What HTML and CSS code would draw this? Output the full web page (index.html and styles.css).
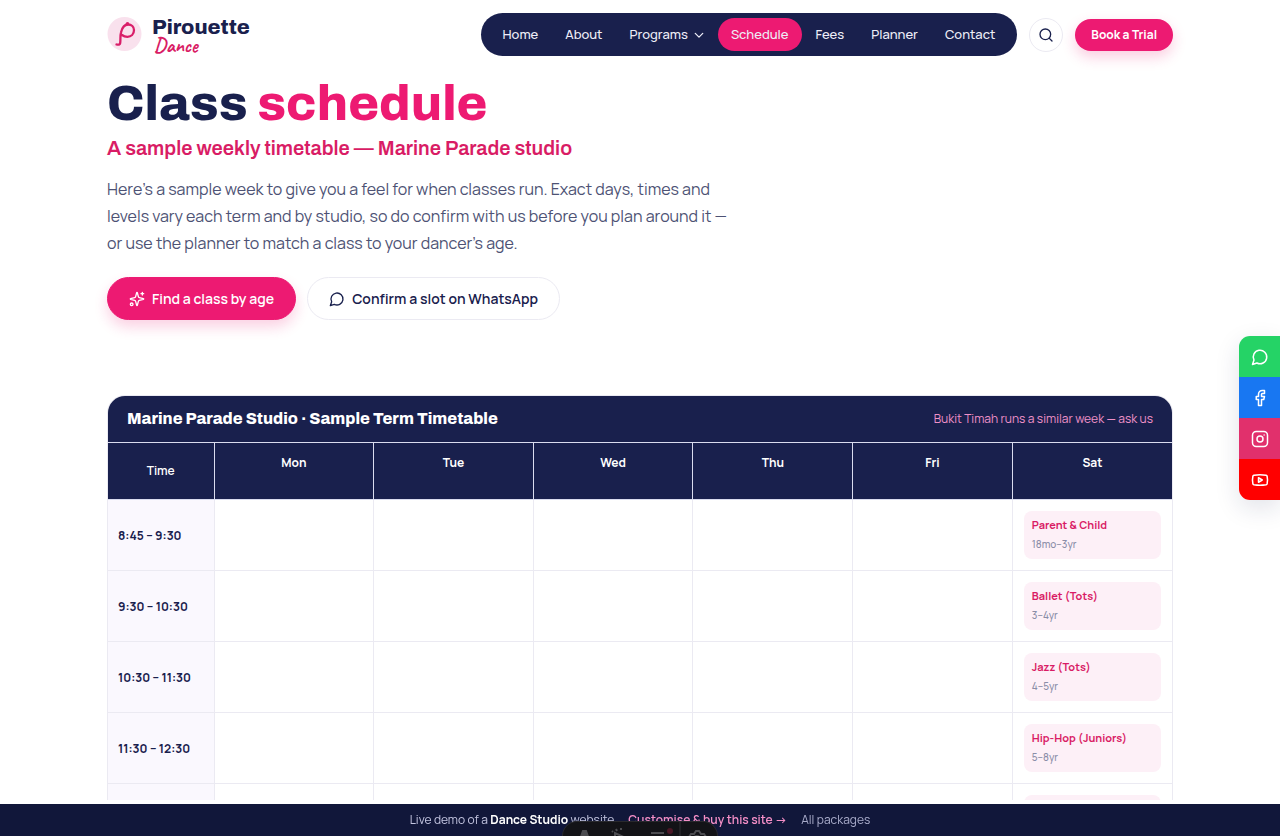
FILE: index.html
```
<!DOCTYPE html>
<html lang="en">
<head>
<meta charset="utf-8">
<meta name="viewport" content="width=device-width, initial-scale=1">
<title>Class schedule – Pirouette Dance</title>
<link rel="stylesheet" href="styles.css">
</head>
<body>
<header class="site-header wrap">
  <a class="brand" href="#">
    <svg class="brand-mark" viewBox="0 0 36 36" aria-hidden="true"><circle cx="17.500" cy="17" r="17" fill="#f9e1ed"/><path d="M9.500 27.500c2 .5 3.500.2 3.700-1.500.5-4-.2-7 .8-10.500 1.200-5 3.500-8 7-8 3.500 0 6 2.200 6 5.500 0 4.300-3 6.800-6.500 6.800-2.200 0-4-.6-5.500-1.800" fill="none" stroke="#d91f69" stroke-width="2.300" stroke-linecap="round" stroke-linejoin="round"/><circle cx="20.500" cy="6.800" r="1.800" fill="#d91f69"/></svg>
    <span class="brand-text"><span class="brand-name">Pirouette</span><span class="brand-sub">Dance</span></span>
  </a>
  <div class="header-right">
    <nav class="nav" aria-label="Main">
      <a href="#">Home</a>
      <a href="#">About</a>
      <a href="#">Programs<svg class="chevron" viewBox="0 0 24 24" aria-hidden="true"><path d="m3 8 9 9 9-9"/></svg></a>
      <a class="active" href="#" aria-current="page">Schedule</a>
      <a href="#">Fees</a>
      <a href="#">Planner</a>
      <a href="#">Contact</a>
    </nav>
    <button class="search" type="button" aria-label="Search"><svg class="icon" viewBox="0 0 24 24"><circle cx="11" cy="11" r="8"/><path d="m21 21-4.300-4.300"/></svg></button>
    <a class="trial" href="#">Book a Trial</a>
  </div>
</header>
<main class="wrap">
  <section class="hero">
    <h1>Class <span>schedule</span></h1>
    <p class="subtitle">A sample weekly timetable — Marine Parade studio</p>
    <p class="lead">Here’s a sample week to give you a feel for when classes run. Exact days, times and levels vary each term and by studio, so do confirm with us before you plan around it — or use the planner to match a class to your dancer’s age.</p>
    <div class="actions">
      <a class="btn btn-primary" href="#"><svg class="icon" viewBox="0 0 24 24" aria-hidden="true"><path d="M9.940 15.500A2 2 0 0 0 8.500 14.060l-6.140-1.580a.5.5 0 0 1 0-.96L8.500 9.940A2 2 0 0 0 9.940 8.500l1.580-6.140a.5.5 0 0 1 .96 0L14.060 8.500A2 2 0 0 0 15.500 9.940l6.140 1.580a.5.5 0 0 1 0 .96L15.500 14.060a2 2 0 0 0-1.440 1.440l-1.580 6.140a.5.5 0 0 1-.96 0z"/><path d="M20 2v4M22 4h-4"/><circle cx="4" cy="20" r="2"/></svg>Find a class by age</a>
      <a class="btn btn-outline" href="#"><svg class="icon" viewBox="0 0 24 24" aria-hidden="true"><path d="M7.900 20A9 9 0 1 0 4 16.100L2 22Z"/></svg>Confirm a slot on WhatsApp</a>
    </div>
  </section>
  <section class="timetable">
    <div class="timetable-head"><h2>Marine Parade Studio · Sample Term Timetable</h2><p>Bukit Timah runs a similar week — ask us</p></div>
    <table>
      <thead><tr><th class="time" scope="col">Time</th><th scope="col">Mon</th><th scope="col">Tue</th><th scope="col">Wed</th><th scope="col">Thu</th><th scope="col">Fri</th><th scope="col">Sat</th></tr></thead>
      <tbody>
        <tr><th scope="row">8:45 – 9:30</th><td></td><td></td><td></td><td></td><td></td><td><div class="slot"><strong>Parent &amp; Child</strong><span>18mo–3yr</span></div></td></tr>
        <tr><th scope="row">9:30 – 10:30</th><td></td><td></td><td></td><td></td><td></td><td><div class="slot"><strong>Ballet (Tots)</strong><span>3–4yr</span></div></td></tr>
        <tr><th scope="row">10:30 – 11:30</th><td></td><td></td><td></td><td></td><td></td><td><div class="slot"><strong>Jazz (Tots)</strong><span>4–5yr</span></div></td></tr>
        <tr><th scope="row">11:30 – 12:30</th><td></td><td></td><td></td><td></td><td></td><td><div class="slot"><strong>Hip-Hop (Juniors)</strong><span>5–8yr</span></div></td></tr>
        <tr><th scope="row"></th><td></td><td></td><td></td><td></td><td></td><td><div class="slot"></div></td></tr>
      </tbody>
    </table>
  </section>
</main>
<aside class="social" aria-label="Social links">
  <a class="whatsapp" href="#" aria-label="WhatsApp"><svg class="icon" viewBox="0 0 24 24"><path d="M7.900 20A9 9 0 1 0 4 16.100L2 22Z"/></svg></a>
  <a class="facebook" href="#" aria-label="Facebook"><svg class="icon" viewBox="0 0 24 24"><path d="M18 2h-3a5 5 0 0 0-5 5v3H7v4h3v8h4v-8h3l1-4h-4V7a1 1 0 0 1 1-1h3z"/></svg></a>
  <a class="instagram" href="#" aria-label="Instagram"><svg class="icon" viewBox="0 0 24 24"><rect x="2" y="2" width="20" height="20" rx="5"/><circle cx="12" cy="12" r="4"/><path d="M17.500 6.500h.01"/></svg></a>
  <a class="youtube" href="#" aria-label="YouTube"><svg class="icon" viewBox="0 0 24 24"><path d="M2.500 17a24 24 0 0 1 0-10 2 2 0 0 1 1.400-1.400 50 50 0 0 1 16.200 0A2 2 0 0 1 21.500 7a24 24 0 0 1 0 10 2 2 0 0 1-1.400 1.400 50 50 0 0 1-16.200 0A2 2 0 0 1 2.500 17"/><path d="m10 15 5-3-5-3z"/></svg></a>
</aside>
<footer class="demo-bar">
  <span>Live demo of a <strong>Dance Studio</strong> website</span>
  <a class="buy" href="#">Customise &amp; buy this site →</a>
  <a class="packages" href="#">All packages</a>
</footer>
<div class="toolbar" aria-hidden="true">
  <svg viewBox="0 0 156 30" fill="none" stroke="#4c4c50" stroke-width="2"><path d="m16 20 4-11h3l4 11z" fill="#4c4c50"/><path d="M52 20V11l13 6-11 2M53 7l1 2M58 6v2M49 9l1 1"/><path d="M88 11h13M95 17h7"/><circle cx="107" cy="9" r="3" fill="#4a1726" stroke="none"/><path d="M117 0v30" stroke="#303034" stroke-width="1"/><circle cx="134" cy="17" r="3"/><path d="M126 19v-4l2-3h3l2-3h3l2 3h3l2 3v4"/></svg>
</div>
</body>
</html>
```
FILE: styles.css
```
:root {
  --navy: #19204d;
  --pink: #ed1a72;
  --rose: #d91c65;
  --line: #ebeaf2;
  --body: Manrope, Inter, "Liberation Sans", sans-serif;
  --display: Archivo, "Liberation Sans", Arial, sans-serif;
}
* { box-sizing: border-box; }
html { scrollbar-width: none; }
body { margin: 0; background: #fff; color: var(--navy); font-family: var(--body); font-size: 13px; }
h1, h2, p { margin: 0; }
a { color: inherit; text-decoration: none; }
.wrap { width: calc(100% - 48px); max-width: 1066px; margin: 0 auto; }
.icon { width: 16px; height: 16px; fill: none; stroke: currentColor; stroke-width: 2; stroke-linecap: round; stroke-linejoin: round; }

.site-header { display: flex; align-items: center; justify-content: space-between; padding-top: 13px; }
.brand { display: flex; align-items: center; gap: 9px; }
.brand-mark { width: 36px; height: 36px; }
.brand-text { display: flex; flex-direction: column; }
.brand-name { font: 800 21px/22px var(--display); }
.brand-sub { padding-left: 2px; font: 700 20px/16px Caveat, Lato, cursive; color: var(--rose); }
.header-right { display: flex; align-items: center; gap: 12px; }
.nav { display: flex; gap: 1px; padding: 5px 9px; border-radius: 22px; background: var(--navy); color: #eeeef8; }
.nav a { display: flex; align-items: center; gap: 6px; padding: 0 13px; border-radius: 17px; font-weight: 500; line-height: 33px; }
.nav .active { background: var(--pink); }
.chevron { width: 10px; height: 10px; fill: none; stroke: currentColor; stroke-width: 3; stroke-linecap: round; stroke-linejoin: round; }
.search { display: grid; place-items: center; width: 34px; height: 34px; padding: 0; border: 1px solid var(--line); border-radius: 50%; background: #fff; color: var(--navy); }
.trial { padding: 0 16px; border-radius: 16px; background: var(--pink); color: #fff; font-size: 12px; font-weight: 700; line-height: 32px; box-shadow: 0 6px 14px #ed1a7238; }

.hero { padding-top: 20px; }
h1 { font: 800 50px/56px var(--display); }
h1 span { color: var(--pink); }
.subtitle { margin-top: 4px; color: var(--rose); font: 600 20px/24px var(--display); }
.lead { max-width: 630px; margin-top: 16px; color: #4d5274; font-size: 16px; line-height: 27px; }
.actions { display: flex; flex-wrap: wrap; gap: 11px; margin-top: 20px; }
.btn { display: flex; align-items: center; gap: 7px; padding: 0 21px; border: 1px solid var(--line); border-radius: 22px; font-size: 14px; font-weight: 600; line-height: 41px; }
.btn-primary { border-color: var(--pink); background: var(--pink); color: #fff; box-shadow: 0 7px 14px #ed1a7233; }

.timetable { margin: 75px 0 120px; overflow: hidden; border: 1px solid var(--line); border-radius: 18px; }
.timetable-head { display: flex; align-items: center; justify-content: space-between; padding: 0 19px; background: var(--navy); color: #fff; line-height: 46px; }
.timetable-head h2 { font: 800 16px/46px var(--display); }
.timetable-head p { color: #ef91c8; font-size: 12px; }
table { width: 100%; border-collapse: collapse; table-layout: fixed; font-size: 12px; }
th, td { border: 1px solid var(--line); }
tr > :first-child { border-left: 0; }
tr > :last-child { border-right: 0; }
thead th { height: 57px; padding: 12px 11px; background: var(--navy); border-color: #dadcef; color: #fff; font-weight: 700; line-height: 16px; vertical-align: top; }
thead .time { width: 106px; font-weight: 600; vertical-align: middle; }
tbody th { padding: 0 10px; background: #faf8fe; font-weight: 700; text-align: left; }
td { height: 71px; padding: 11px; }
.slot { display: flex; flex-direction: column; gap: 3px; height: 48px; padding: 5px 8px; border-radius: 8px; background: #fdf0f7; line-height: 17px; }
.slot strong { color: var(--rose); font-size: 11px; font-weight: 700; }
.slot span { color: #8b8ea8; font-size: 10px; font-weight: 500; }

.social { position: fixed; top: 336px; right: 0; width: 41px; overflow: hidden; border-radius: 11px 0 0 11px; box-shadow: 0 8px 24px #19204d20; color: #fff; }
.social a { display: grid; place-items: center; height: 41px; }
.social .icon { width: 18px; height: 18px; }
.whatsapp { background: #25d366; }
.facebook { background: #1877f2; }
.instagram { background: #e1306c; }
.youtube { background: #f00; }

.demo-bar { position: fixed; inset: auto 0 0; display: flex; justify-content: center; gap: 14px; background: #11173a; color: #c3c5e0; font-size: 12px; line-height: 32px; box-shadow: 0 -4px 0 #fff; }
.demo-bar strong { color: #fff; font-weight: 700; }
.buy { color: #f58fc7; font-weight: 600; }
.packages { color: #a9acca; }
.toolbar { position: fixed; bottom: 0; left: 50%; width: 156px; height: 15px; margin-left: -78px; overflow: hidden; border: 1px solid #29292d; border-bottom: 0; border-radius: 15px 15px 0 0; background: #131317; }
.toolbar svg { display: block; width: 156px; height: 30px; }
```
